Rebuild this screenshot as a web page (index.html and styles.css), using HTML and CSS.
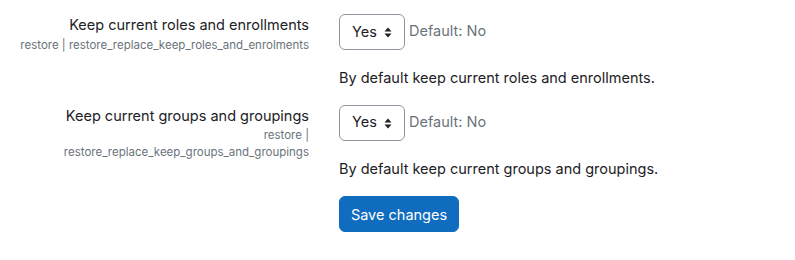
FILE: index.html
```html
<!DOCTYPE html>
<html lang="en">
<head>
  <meta charset="UTF-8" />
  <title>Restore settings</title>
  <link rel="stylesheet" href="styles.css">
</head>
<body>
  <form class="settings">
    <div class="form-item">
      <div class="form-label">
        <label>Keep current roles and enrollments</label>
        <span class="form-shortname">restore | restore_replace_keep_roles_and_enrolments</span>
      </div>
      <div class="form-setting">
        <div class="form-select">
          <div class="custom-select">
            <span>Yes</span>
            <svg class="caret" width="8" height="11" viewBox="0 0 8 11"><path d="M4 0.5 L7.5 4.5 H0.5 Z M4 10.5 L7.5 6.5 H0.5 Z" fill="#1d2125"/></svg>
          </div>
          <span class="form-defaultinfo">Default: No</span>
        </div>
        <div class="form-description">By default keep current roles and enrollments.</div>
      </div>
    </div>

    <div class="form-item">
      <div class="form-label">
        <label>Keep current groups and groupings</label>
        <span class="form-shortname">restore | restore_replace_keep_groups_and_groupings</span>
      </div>
      <div class="form-setting">
        <div class="form-select">
          <div class="custom-select">
            <span>Yes</span>
            <svg class="caret" width="8" height="11" viewBox="0 0 8 11"><path d="M4 0.5 L7.5 4.5 H0.5 Z M4 10.5 L7.5 6.5 H0.5 Z" fill="#1d2125"/></svg>
          </div>
          <span class="form-defaultinfo">Default: No</span>
        </div>
        <div class="form-description">By default keep current groups and groupings.</div>
      </div>
    </div>

    <div class="form-item">
      <div></div>
      <div class="form-setting">
        <button type="button" class="btn-primary">Save changes</button>
      </div>
    </div>
  </form>
</body>
</html>
```

FILE: styles.css
```css
body {
  margin: 0;
  font-family: Inter, "Liberation Sans", Arial, sans-serif;
  font-size: 14.5px;
  line-height: 22.5px;
  color: #1d2125;
  background: #fff;
}

.settings {
  padding-top: 14px;
}

.form-item {
  display: grid;
  grid-template-columns: 324px 1fr;
  margin-bottom: 15px;
}

.form-label {
  text-align: right;
  padding-right: 15px;
  padding-left: 17px;
}

.form-label label {
  display: block;
}

.form-shortname {
  display: block;
  font-size: 11.5px;
  line-height: 17px;
  color: #6a737b;
}

.form-setting {
  padding-left: 15px;
}

.form-select {
  display: flex;
  align-items: flex-start;
}

.custom-select {
  display: flex;
  align-items: center;
  justify-content: space-between;
  box-sizing: border-box;
  width: 66px;
  height: 36px;
  padding: 0 12px 0 12px;
  border: 1px solid #8f959e;
  border-radius: 6px;
}

.caret {
  margin-top: 1px;
}

.form-defaultinfo {
  margin-left: 4px;
  margin-top: 6px;
  color: #6a737b;
}

.form-description {
  margin-top: 17px;
}

.btn-primary {
  font-family: inherit;
  font-size: 14.5px;
  color: #fff;
  background: #0f6cbf;
  border: 1px solid #0f6cbf;
  border-radius: 6px;
  width: 120px;
  height: 36px;
  padding: 0;
  margin-top: 1px;
}
```
